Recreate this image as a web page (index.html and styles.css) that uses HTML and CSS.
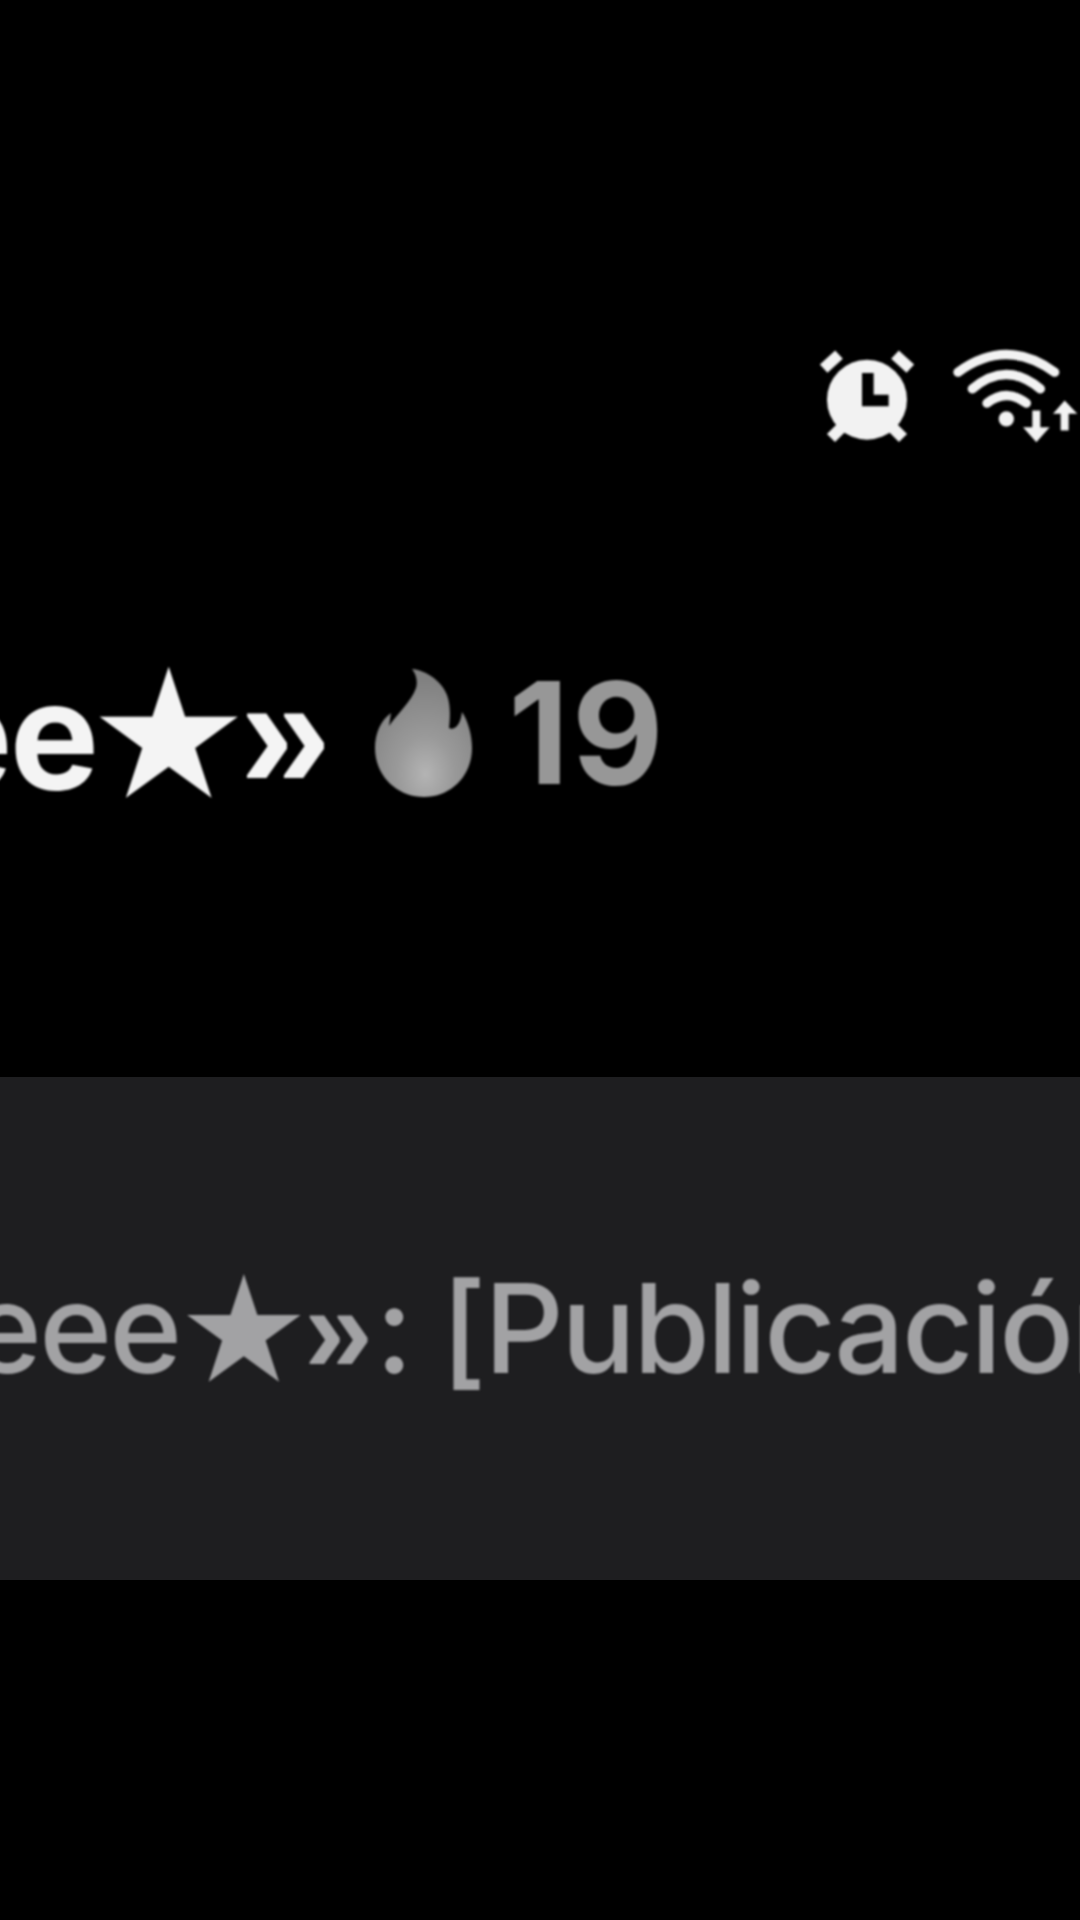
FILE: index.html
```html
<!DOCTYPE html>
<html lang="es">
<head>
    <meta charset="UTF-8">
    <meta name="viewport" content="width=device-width, initial-scale=1.0">
    <title>Notificación</title>
    <link rel="stylesheet" href="styles.css">
</head>
<body>
    <div class="status-bar">
        <svg class="icon-alarm" viewBox="0 0 300 285">
            <circle cx="150" cy="155" r="120" fill="#f2f2f2"/>
            <path d="M135 75H170V140H215V175H135Z" fill="#000"/>
            <path d="M20 62L66 20M234 20L280 62M42 270L72 240M258 270L228 240" stroke="#f2f2f2" stroke-width="34"/>
        </svg>
        <svg class="icon-wifi" viewBox="0 0 375 290">
            <g fill="none" stroke="#f2f2f2" stroke-width="28" stroke-linecap="round">
                <path d="M15 75Q160 -31 305 75"/>
                <path d="M58 125Q160 39 262 125"/>
                <path d="M102 168Q160 122 220 168"/>
            </g>
            <circle cx="160" cy="215" r="23" fill="#f2f2f2"/>
            <path d="M250 190V260M335 250V190" stroke="#f2f2f2" stroke-width="24"/>
            <path d="M210 240L250 285L290 240ZM300 200L335 160L373 200Z" fill="#f2f2f2"/>
        </svg>
    </div>

    <div class="headline">
        <span class="author">eee<span class="star">★</span><span class="quote">»</span></span>
        <svg class="icon-flame" viewBox="0 0 97 129">
            <defs>
                <radialGradient id="flameFill" cx="0.52" cy="0.82" r="0.75">
                    <stop offset="0" stop-color="#b4b4b4"/>
                    <stop offset="0.4" stop-color="#999"/>
                    <stop offset="1" stop-color="#808080"/>
                </radialGradient>
            </defs>
            <path d="M37 1C50 2 66 12 72 27C76 38 75 50 74 60C78 62 85 60 87 44C93 53 97 67 97 80C97 108 76 129 49 129C22 129 0 108 0 80C0 65 6 52 16 45L14 58C22 46 36 34 41 20C43 13 41 6 37 1Z" fill="url(#flameFill)"/>
        </svg>
        <span class="count">19</span>
    </div>

    <div class="comment-band">
        <p class="comment">eee<span class="star">★</span><span class="quote">»</span>: [Publicación</p>
    </div>
</body>
</html>
```

FILE: styles.css
```css
html, body {
    height: 100%;
}

body {
    margin: 0;
    padding: 0;
    width: 1080px;
    height: 1920px;
    overflow: hidden;
    background-color: #000;
    font-family: Inter, "Liberation Sans", sans-serif;
}

.status-bar {
    display: flex;
    justify-content: flex-end;
    align-items: center;
    gap: 36px;
    height: 97px;
    padding: 347px 2px 0 0;
    filter: blur(0.8px);
}

.icon-alarm {
    width: 100px;
    height: 95px;
}

.icon-wifi {
    width: 125px;
    height: 97px;
}

.headline {
    display: flex;
    align-items: center;
    height: 140px;
    margin-top: 218px;
    margin-left: -163px;
    white-space: nowrap;
    filter: blur(0.8px);
}

.author {
    font-size: 150px;
    font-weight: 700;
    letter-spacing: -3px;
    color: #f4f4f4;
}

.star {
    font-family: "DejaVu Sans", sans-serif;
    line-height: 0;
}

.author .star {
    margin-left: -8px;
    font-size: 180px;
    vertical-align: -8px;
    letter-spacing: 0;
}

.comment .star {
    margin-left: -2px;
    font-size: 148px;
    font-weight: 400;
    vertical-align: -8px;
    letter-spacing: 0;
}

.quote {
    font-family: "Liberation Sans", sans-serif;
}

.author .quote {
    margin-left: -10px;
    font-size: 165px;
}

.comment .quote {
    margin-left: -6px;
    margin-right: 5px;
    font-weight: 700;
}

.icon-flame {
    width: 97px;
    height: 129px;
    margin-left: 47px;
    flex-shrink: 0;
}

.count {
    margin-left: 36px;
    font-size: 141px;
    font-weight: 700;
    letter-spacing: 3px;
    color: #979797;
}

.comment-band {
    display: flex;
    align-items: center;
    height: 503px;
    margin-top: 275px;
    background-color: #1e1e20;
    overflow: hidden;
}

.comment {
    margin: 0 0 0 -31px;
    font-size: 124px;
    font-weight: 500;
    line-height: 1;
    letter-spacing: -2.7px;
    color: #a2a2a4;
    white-space: nowrap;
    filter: blur(1px);
}
```
